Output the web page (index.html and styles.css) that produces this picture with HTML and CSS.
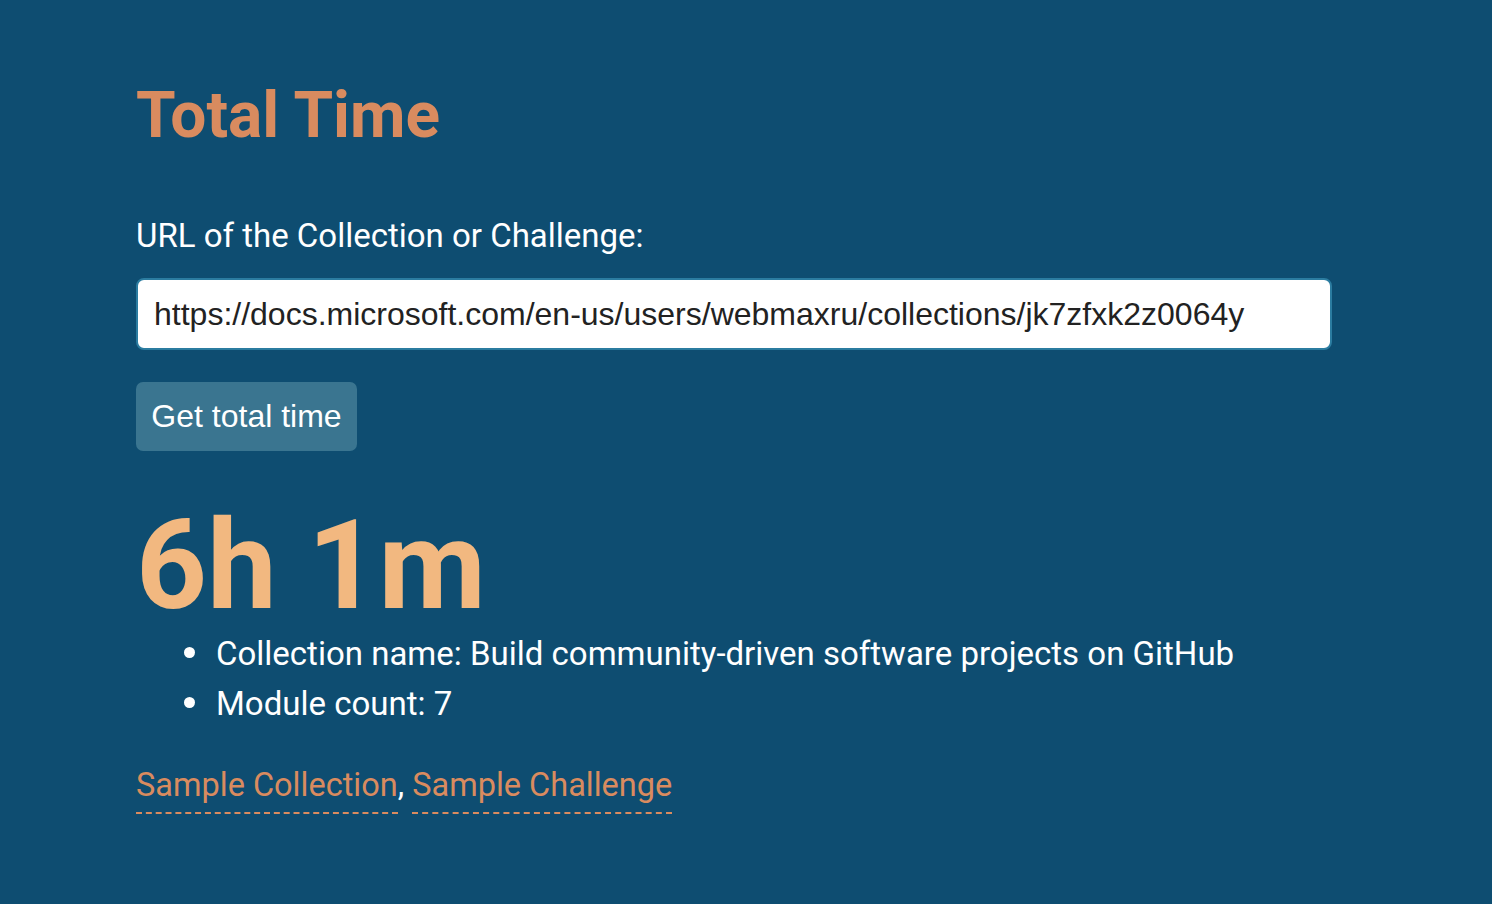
FILE: index.html
```html
<!DOCTYPE html>
<html lang="en">
<head>
<meta charset="utf-8">
<title>Total Time</title>
<link rel="stylesheet" href="styles.css">
</head>
<body>
<main class="page">
  <h1 class="title">Total Time</h1>
  <form class="form">
    <label class="label" for="url">URL of the Collection or Challenge:</label>
    <input class="input" id="url" type="text" value="https://docs.microsoft.com/en-us/users/webmaxru/collections/jk7zfxk2z0064y">
    <button class="button" type="button">Get total time</button>
  </form>
  <div class="result">6h 1m</div>
  <ul class="details">
    <li class="detail">Collection name: Build community-driven software projects on GitHub</li>
    <li class="detail">Module count: 7</li>
  </ul>
  <p class="samples"><a class="sample" href="#">Sample Collection</a>, <a class="sample" href="#">Sample Challenge</a></p>
</main>
</body>
</html>
```
FILE: styles.css
```css
html, body {
  margin: 0;
  padding: 0;
  background: #0e4d71;
  height: 100%;
}
body {
  font-family: Roboto, "Open Sans", sans-serif;
  color: #ffffff;
}
.page {
  padding: 84px 0 0 136px;
  display: flex;
  flex-direction: column;
  align-items: flex-start;
}
.title {
  margin: 0;
  font-size: 64px;
  line-height: 64px;
  font-weight: 700;
  color: #d98b5f;
}
.form {
  display: flex;
  flex-direction: column;
  align-items: flex-start;
  margin-top: 68px;
}
.label {
  font-size: 33px;
  line-height: 40px;
  font-weight: 400;
}
.input {
  margin-top: 22px;
  box-sizing: border-box;
  width: 1196px;
  height: 72px;
  padding: 0 16px;
  border: 2px solid #2b7ca0;
  border-radius: 8px;
  background: #ffffff;
  color: #222222;
  font-family: "Liberation Sans", Arial, sans-serif;
  font-size: 32px;
  outline: none;
}
.button {
  margin-top: 32px;
  box-sizing: border-box;
  width: 221px;
  height: 69px;
  border: none;
  border-radius: 7px;
  background: #3a7590;
  color: #ffffff;
  font-family: "Liberation Sans", Arial, sans-serif;
  font-size: 32px;
  padding: 0;
}
.result {
  margin-top: 53px;
  font-size: 124px;
  line-height: 124px;
  font-weight: 700;
  color: #f2b880;
}
.details {
  margin: 1px 0 0 0;
  padding: 0 0 0 48px;
  list-style: none;
  font-size: 33px;
  line-height: 50px;
}
.detail::before {
  content: "";
  display: inline-block;
  width: 11px;
  height: 11px;
  border-radius: 50%;
  background: #ffffff;
  margin-right: 21px;
  vertical-align: 7px;
}
.samples {
  margin: 36px 0 0 0;
  font-size: 32.5px;
  line-height: 40px;
  color: #ffffff;
}
.sample {
  color: #d98b5f;
  text-decoration: none;
  padding-bottom: 8px;
  border-bottom: 2px dashed #d98b5f;
}
```
